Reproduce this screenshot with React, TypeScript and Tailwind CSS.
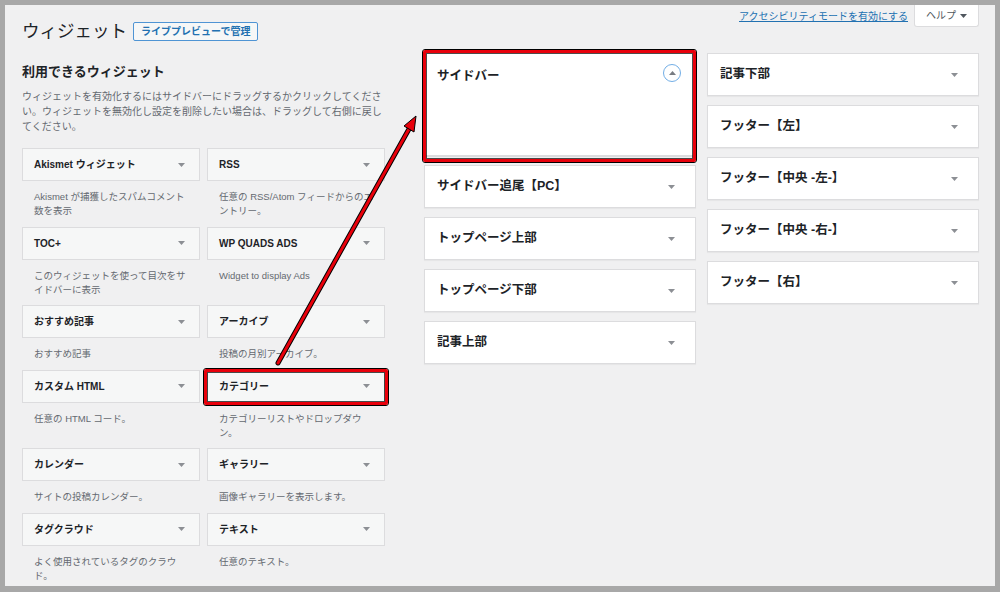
import React from 'react';

const font = "font-['Liberation_Sans','Noto_Sans_CJK_JP',sans-serif]";

const widgets = [
  { name: 'Akismet ウィジェット', desc: 'Akismet が捕獲したスパムコメント数を表示' },
  { name: 'RSS', desc: '任意の RSS/Atom フィードからのエントリー。' },
  { name: 'TOC+', desc: 'このウィジェットを使って目次をサイドバーに表示' },
  { name: 'WP QUADS ADS', desc: 'Widget to display Ads' },
  { name: 'おすすめ記事', desc: 'おすすめ記事' },
  { name: 'アーカイブ', desc: '投稿の月別アーカイブ。' },
  { name: 'カスタム HTML', desc: '任意の HTML コード。' },
  { name: 'カテゴリー', desc: 'カテゴリーリストやドロップダウン。', marked: true },
  { name: 'カレンダー', desc: 'サイトの投稿カレンダー。' },
  { name: 'ギャラリー', desc: '画像ギャラリーを表示します。' },
  { name: 'タグクラウド', desc: 'よく使用されているタグのクラウド。' },
  { name: 'テキスト', desc: '任意のテキスト。' },
];

const middleAreas = ['サイドバー追尾【PC】', 'トップページ上部', 'トップページ下部', '記事上部'];
const rightAreas = ['記事下部', 'フッター【左】', 'フッター【中央 -左-】', 'フッター【中央 -右-】', 'フッター【右】'];

function Caret() {
  return (
    <svg width="7" height="4" viewBox="0 0 7 4">
      <path d="M0 0h7L3.5 4z" fill="#8c8f94" />
    </svg>
  );
}

// 赤い強調枠（黒フチ付き）
function RedFrame({ className }: { className: string }) {
  return (
    <div className={'pointer-events-none absolute rounded-[3px] border border-black ' + className}>
      <div className="h-full w-full rounded-[2px] border-[3px] border-[#e8000b]">
        <div className="h-full w-full border border-black/70" />
      </div>
    </div>
  );
}

function AreaCard({ title }: { title: string }) {
  return (
    <div className="mb-[9px] flex h-[43px] items-center justify-between border border-[#dcdcde] bg-white pl-[12px] pr-[20px] shadow-[0_1px_1px_rgba(0,0,0,0.04)]">
      <span className="text-[12.5px] font-bold text-[#1d2327]">{title}</span>
      <Caret />
    </div>
  );
}

export default function App() {
  return (
    <div className={`relative h-[592px] w-[1000px] bg-[#a8a8a8] pb-[6px] pl-[5px] pr-[5px] pt-[5px] ${font}`}>
      <div className="flex h-full overflow-hidden bg-[#f0f0f1]">
        {/* 利用できるウィジェット */}
        <div className="ml-[17px] w-[363px] shrink-0 pt-[15px]">
          <div className="flex h-[22px] items-center">
            <h1 className="text-[17.5px] leading-[22px] text-[#1d2327]">ウィジェット</h1>
            <span className="ml-[6px] flex h-[19px] items-center rounded-[2px] border border-[#4f94d4] bg-[#f6f7f7] px-[7px] text-[10px] font-bold text-[#2271b1]">
              ライブプレビューで管理
            </span>
          </div>
          <h2 className="mt-[21px] text-[13px] font-bold leading-[18px] text-[#1d2327]">利用できるウィジェット</h2>
          <p className="mt-[8px] text-[10px] leading-[15px] text-[#646970]">
            ウィジェットを有効化するにはサイドバーにドラッグするかクリックしてください。ウィジェットを無効化し設定を削除したい場合は、ドラッグして右側に戻してください。
          </p>
          <div className="mt-[14px] grid grid-cols-2 gap-x-[7px]">
            {widgets.map((w) => (
              <div key={w.name}>
                <div className="relative">
                  <div className="flex h-[33px] items-center justify-between border border-[#dcdcde] bg-[#f6f7f7] pl-[11px] pr-[14px]">
                    <span className="text-[10px] font-bold text-[#1d2327]">{w.name}</span>
                    <Caret />
                  </div>
                  {w.marked && <RedFrame className="-bottom-[3px] -left-[4px] -right-[4px] -top-[2px]" />}
                </div>
                <p className="px-[12px] pb-[8.5px] pt-[9px] text-[9.5px] leading-[14px] text-[#646970]">{w.desc}</p>
              </div>
            ))}
          </div>
        </div>

        {/* ウィジェットエリア */}
        <div className="ml-[39px] flex flex-col">
          <div className="flex h-[22px] items-center justify-end gap-[6px]">
            <a className="text-[10px] text-[#2271b1] underline">アクセシビリティモードを有効にする</a>
            <span className="flex h-[22px] w-[65px] items-center justify-center gap-[4px] rounded-b-[3px] border border-t-0 border-[#dcdcde] bg-white text-[10px] text-[#50575e]">
              ヘルプ
              <svg width="7" height="4" viewBox="0 0 7 4">
                <path d="M0 0h7L3.5 4z" fill="#50575e" />
              </svg>
            </span>
          </div>
          <div className="mt-[24px] flex gap-[11px]">
            <div className="w-[272px]">
              <div className="relative mb-[8px]">
                <div className="h-[106px] border border-[#dcdcde] border-b-[2px] bg-white">
                  <div className="flex items-start justify-between pl-[12px] pr-[14px]">
                    <span className="mt-[15px] text-[12.5px] font-bold leading-[18px] text-[#1d2327]">サイドバー</span>
                    <span className="mt-[12px] flex h-[18px] w-[18px] items-center justify-center rounded-full border-[1.5px] border-[#72aee6] bg-white">
                      <svg width="7" height="4" viewBox="0 0 7 4">
                        <path d="M0 4h7L3.5 0z" fill="#787c82" />
                      </svg>
                    </span>
                  </div>
                </div>
                <RedFrame className="-bottom-[6px] -left-[2px] -right-[1px] -top-[2px]" />
              </div>
              {middleAreas.map((a) => (
                <AreaCard key={a} title={a} />
              ))}
            </div>
            <div className="w-[272px] pt-[2px]">
              {rightAreas.map((a) => (
                <AreaCard key={a} title={a} />
              ))}
            </div>
          </div>
        </div>
      </div>

      {/* 矢印 */}
      <svg className="pointer-events-none absolute left-0 top-0" width="1000" height="592" viewBox="0 0 1000 592">
        <line x1="278" y1="363" x2="409" y2="129" stroke="#000" strokeWidth="5" strokeLinecap="round" />
        <line x1="278" y1="363" x2="409" y2="129" stroke="#e8000b" strokeWidth="3" strokeLinecap="round" />
        <polygon points="416,116 414,132 404,126" fill="#e8000b" stroke="#000" strokeWidth="1" strokeLinejoin="round" />
      </svg>
    </div>
  );
}
